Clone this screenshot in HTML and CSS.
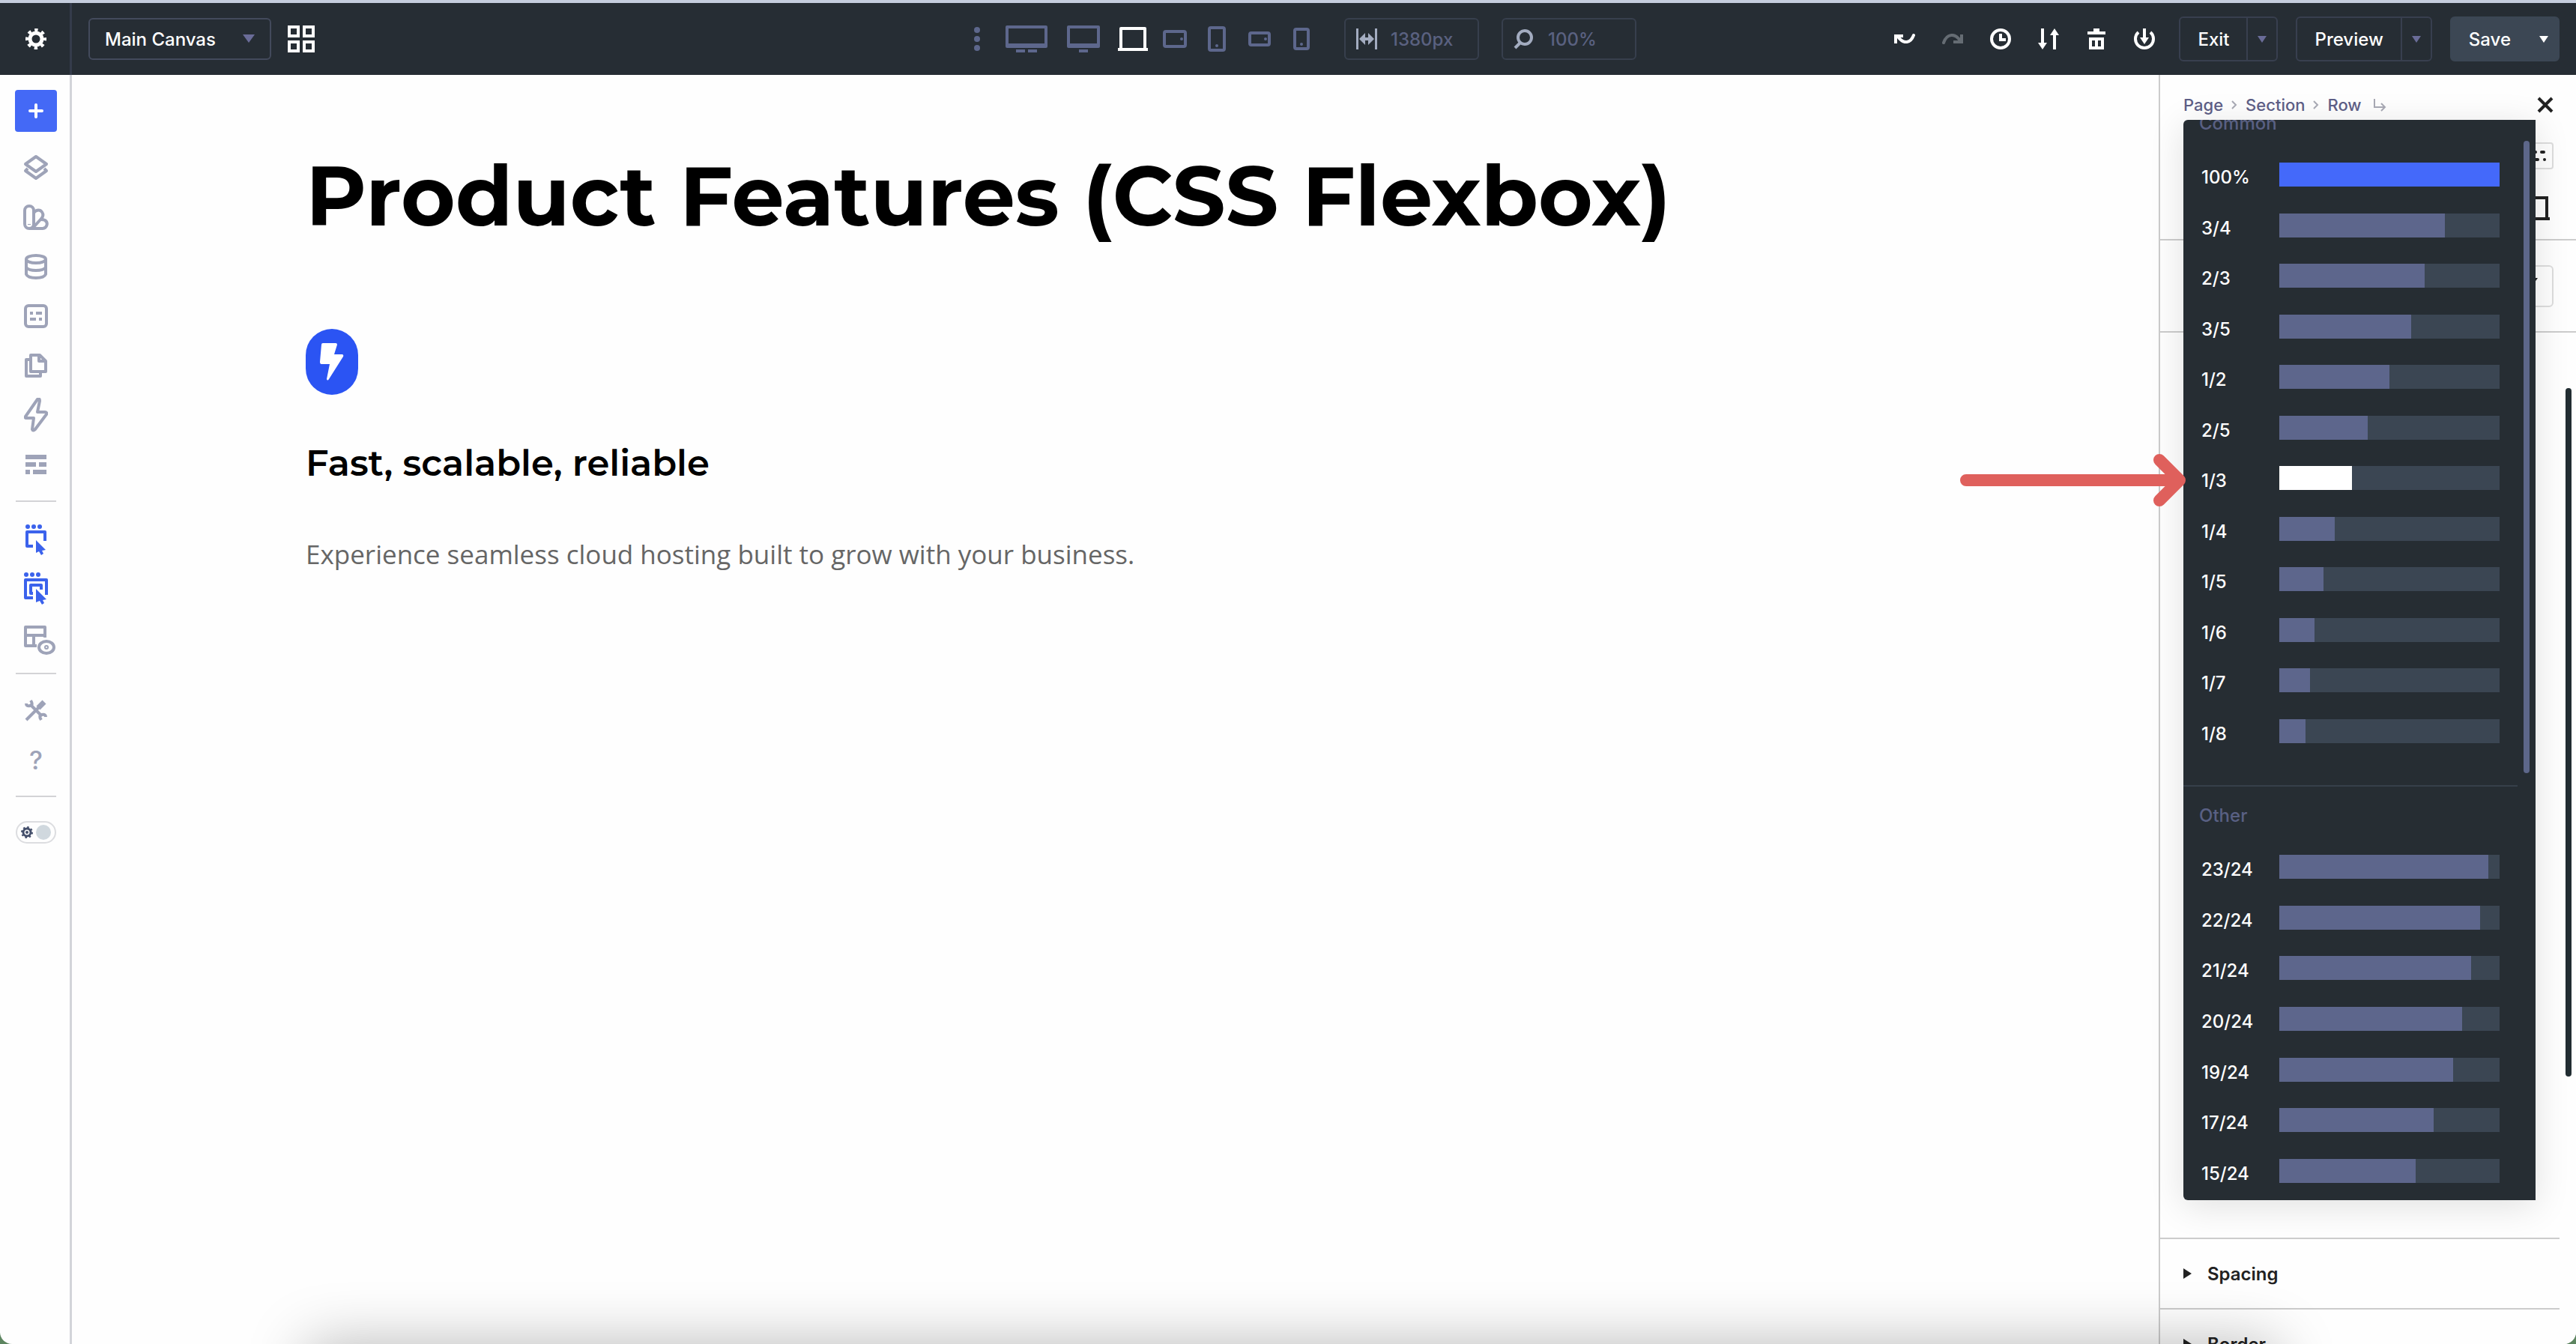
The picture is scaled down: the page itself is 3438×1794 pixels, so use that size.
FILE: index.html
```html
<!DOCTYPE html>
<html lang="en">
<head>
    <meta charset="UTF-8">
    <meta name="viewport" content="width=device-width, initial-scale=1.0">
    <title>Main Canvas</title>
    <link rel="stylesheet" href="styles.css">
</head>
<body>
<div class="app">
    <header class="topbar">
        <div class="topbar-left">
            <button class="settings" aria-label="Settings">
                <svg width="28" height="28" viewBox="0 0 28 28"><circle cx="14" cy="14" r="8" fill="none" stroke="#fff" stroke-width="5"/><circle cx="14" cy="14" r="12" fill="none" stroke="#fff" stroke-width="4" stroke-dasharray="4.4 5.025" stroke-dashoffset="2.2"/></svg>
            </button>
            <label class="canvas-select">
                <select aria-label="Canvas"><option>Main Canvas</option></select>
                <span class="caret"></span>
            </label>
            <button class="icon-btn" aria-label="Grid">
                <svg width="36" height="36" viewBox="0 0 36 36" fill="none" stroke="#fff" stroke-width="4"><path d="M2 2h12v12H2zM22 2h12v12H22zM2 22h12v12H2zM22 22h12v12H22z"/></svg>
            </button>
        </div>
        <div class="topbar-center">
            <button class="icon-btn" aria-label="More">
                <svg width="34" height="36" viewBox="0 0 34 36" fill="#5d678c"><circle cx="18" cy="6" r="4"/><circle cx="18" cy="18" r="4"/><circle cx="18" cy="30" r="4"/></svg>
            </button>
            <button class="icon-btn" aria-label="Ultra wide">
                <svg width="60" height="36" viewBox="0 0 60 36" fill="#5d678c"><path fill-rule="evenodd" d="M4 0h52q2 0 2 2v26q0 2-2 2H4q-2 0-2-2V2q0-2 2-2zm2 4v20h48V4z"/><path d="M16 32h12v4H16zM32 32h12v4H32z"/></svg>
            </button>
            <button class="icon-btn" aria-label="Widescreen">
                <svg width="52" height="36" viewBox="0 0 52 36" fill="#5d678c"><path fill-rule="evenodd" d="M6 0h40q2 0 2 2v26q0 2-2 2H6q-2 0-2-2V2q0-2 2-2zm2 4v20h36V4z"/><path d="M20 32h12v4H20z"/></svg>
            </button>
            <button class="icon-btn" aria-label="Desktop">
                <svg width="40" height="32" viewBox="0 0 40 32" fill="#fff"><path fill-rule="evenodd" d="M4 0h32q2 0 2 2v26h2v4H0v-4h2V2q0-2 2-2zm2 4v24h28V4z"/></svg>
            </button>
            <button class="icon-btn" aria-label="Tablet wide">
                <svg width="32" height="24" viewBox="0 0 32 24"><rect x="2" y="2" width="28" height="20" rx="2" fill="none" stroke="#5d678c" stroke-width="4"/><circle cx="25" cy="12" r="2" fill="#5d678c"/></svg>
            </button>
            <button class="icon-btn" aria-label="Tablet">
                <svg width="40" height="34" viewBox="0 0 40 34"><rect x="10" y="2" width="20" height="30" rx="2" fill="none" stroke="#5d678c" stroke-width="4"/><circle cx="20" cy="26" r="2" fill="#5d678c"/></svg>
            </button>
            <button class="icon-btn" aria-label="Phone wide">
                <svg width="34" height="20" viewBox="0 0 34 20"><rect x="4" y="2" width="26" height="16" rx="2" fill="none" stroke="#5d678c" stroke-width="4"/><circle cx="25" cy="10" r="2" fill="#5d678c"/></svg>
            </button>
            <button class="icon-btn" aria-label="Phone">
                <svg width="38" height="30" viewBox="0 0 38 30"><rect x="10" y="2" width="18" height="26" rx="2" fill="none" stroke="#5d678c" stroke-width="4"/><circle cx="19" cy="22" r="2" fill="#5d678c"/></svg>
            </button>
            <label class="field">
                <svg width="28" height="28" viewBox="0 0 28 28" fill="#a3acc0"><path d="M0 0h3v28H0zM25 0h3v28h-3zM4 14l8-8v6h4V6l8 8-8 8v-6h-4v6z"/></svg>
                <input type="text" value="1380px" aria-label="Width">
            </label>
            <label class="field">
                <svg width="28" height="28" viewBox="0 0 28 28" fill="none" stroke="#a3acc0" stroke-width="4"><circle cx="15" cy="12" r="9"/><path d="M9 19l-7 7"/></svg>
                <input type="text" value="100%" aria-label="Zoom">
            </label>
        </div>
        <div class="topbar-right">
            <button class="tool" aria-label="Undo">
                <svg width="28" height="14" viewBox="0 0 28 14"><path d="M5 4q6 8 12 7 6-1 9-9" fill="none" stroke="#fff" stroke-width="4" stroke-linecap="round"/><path d="M0 1h12v4H4v8H0z" fill="#fff"/></svg>
            </button>
            <button class="tool" aria-label="Redo">
                <svg width="28" height="14" viewBox="0 0 28 14"><path d="M2 12q3-9 10-10 6-1 12 7" fill="none" stroke="#656c73" stroke-width="4" stroke-linecap="round"/><path d="M28 13H15V9h9V1h4z" fill="#656c73"/></svg>
            </button>
            <button class="tool" aria-label="History">
                <svg width="28" height="28" viewBox="0 0 28 28" fill="none" stroke="#fff" stroke-width="4"><circle cx="14" cy="14" r="12"/><path d="M14 7v8h7"/></svg>
            </button>
            <button class="tool" aria-label="Sort">
                <svg width="28" height="28" viewBox="0 0 28 28" fill="#fff"><path d="M4 0h4v19h4l-6 9-6-9h4zM20 28h4V9h4l-6-9-6 9h4z"/></svg>
            </button>
            <button class="tool" aria-label="Trash">
                <svg width="24" height="28" viewBox="0 0 24 28" fill="#fff"><path d="M8 0h8v4h8v4H0V4h8z"/><path fill-rule="evenodd" d="M2 12h20v16H2zm4 4v8h4v-8zm8 0v8h4v-8z"/></svg>
            </button>
            <button class="tool" aria-label="Power">
                <svg width="28" height="28" viewBox="0 0 28 28"><path d="M6 5a12 12 0 1 0 16 0" fill="none" stroke="#fff" stroke-width="4"/><path d="M12 0h4v12h4l-6 9-6-9h4z" fill="#fff"/></svg>
            </button>
            <div class="split">
                <button>Exit</button>
                <button class="drop" aria-label="Exit options"><span class="caret small"></span></button>
            </div>
            <div class="split">
                <button>Preview</button>
                <button class="drop" aria-label="Preview options"><span class="caret small"></span></button>
            </div>
            <div class="split save">
                <button>Save</button>
                <button class="drop" aria-label="Save options"><span class="caret small"></span></button>
            </div>
        </div>
    </header>

    <nav class="sidebar">
        <button class="add" aria-label="Add">
            <svg width="20" height="20" viewBox="0 0 20 20" stroke="#fff" stroke-width="4" stroke-linecap="round"><path d="M10 2v16M2 10h16"/></svg>
        </button>
        <button class="side-btn" aria-label="Layers">
            <svg width="34" height="36" viewBox="0 0 34 36"><path d="M17 3l14 10-14 10L3 13zM6 19l-3 3 14 10 14-10-3-3"/></svg>
        </button>
        <button class="side-btn" aria-label="Design">
            <svg width="34" height="34" viewBox="0 0 34 34"><rect x="2" y="2" width="12" height="30" rx="6"/><path d="M14 11c4-5 9-4 11-1s2 6-1 9L14 30M8 32h18a6 6 0 0 0 3-11q-2-1-5-1"/><path d="M8 26v1"/></svg>
        </button>
        <button class="side-btn" aria-label="Data">
            <svg width="30" height="34" viewBox="0 0 30 34"><ellipse cx="15" cy="7" rx="13" ry="5"/><path d="M2 7v20q2 5 13 5t13-5V7M2 18q3 4 13 4t13-4"/></svg>
        </button>
        <button class="side-btn" aria-label="Forms">
            <svg width="32" height="32" viewBox="0 0 32 32"><rect x="2" y="2" width="28" height="28" rx="4"/><path d="M8 12h4M16 12h8M8 20h8M20 20h4"/></svg>
        </button>
        <button class="side-btn" aria-label="Pages">
            <svg width="30" height="34" viewBox="0 0 30 34"><path d="M8 25V3h12l8 8v14zM19 3v8h9M8 9H2v22h19v-5"/></svg>
        </button>
        <button class="side-btn" aria-label="Interactions">
            <svg width="32" height="46" viewBox="0 0 32 46"><path d="M18 2L2 25q-1 2 1 2h10l-2 15q1 3 4 0l15-20q1-3-2-3H18l3-15q0-4-3-2z"/></svg>
        </button>
        <button class="side-btn" aria-label="Structure">
            <svg class="rows" width="28" height="26" viewBox="0 0 28 26"><path d="M0 3h28M0 13h14M18 13h10M0 23h6M10 23h18"/></svg>
        </button>
        <hr>
        <button class="side-btn active" aria-label="Click mode">
            <svg width="32" height="46" viewBox="0 -4 32 46"><path d="M12 30H4V11h24v12"/><g class="solid"><circle cx="5" cy="4" r="3"/><circle cx="13" cy="4" r="3"/><circle cx="21" cy="4" r="3"/><path d="M16 22l13 13-5 1 2 4-3 2-3-5-4 2z"/></g></svg>
        </button>
        <button class="side-btn active" aria-label="Nested click mode">
            <svg width="32" height="48" viewBox="0 -4 32 48"><path d="M12 34H2V10h28v20M12 28H9V17h14v6"/><g class="solid"><circle cx="3" cy="3" r="3"/><circle cx="11" cy="3" r="3"/><circle cx="19" cy="3" r="3"/><path d="M16 22l14 14-5 1 2 4-3 2-3-5-5 2z"/></g></svg>
        </button>
        <button class="side-btn" aria-label="Layout view">
            <svg class="wide" width="52" height="48" viewBox="0 -8 52 48"><path d="M27 28H12V3h26v14M12 14h26M23 14v14"/><ellipse cx="40" cy="30" rx="10" ry="8" class="knock"/><circle cx="40" cy="30" r="1"/></svg>
        </button>
        <hr>
        <button class="side-btn" aria-label="Tools">
            <svg width="30" height="30" viewBox="0 0 30 30"><path d="M2 28L20 10" /><path d="M18 12l8-8" class="grip"/><path d="M7 7l16 16"/><path d="M8 2q4 6-1 7-5 1-5-3M22 28q-4-6 1-7 5-1 5 3"/></svg>
        </button>
        <button class="side-btn help" aria-label="Help">?</button>
        <hr>
        <label class="theme">
            <input type="checkbox" aria-label="Dark mode">
            <svg width="16" height="16" viewBox="0 0 16 16" fill="none" stroke="#444f6b"><circle cx="8" cy="8" r="5" stroke-width="3"/><circle cx="8" cy="8" r="7" stroke-width="2" stroke-dasharray="2.500 3"/><circle cx="8" cy="8" r="1" stroke-width="2"/></svg>
            <span class="knob"></span>
        </label>
    </nav>

    <main class="canvas">
        <h1>Product Features (CSS Flexbox)</h1>
        <div class="badge">
            <svg width="32" height="50" viewBox="0 0 32 50" fill="#fff"><path d="M4 0h17q2 0 2 2l-4 13h11q2 1 1 3L12 48q-2 3-3 0l4-20H2q-2 0-2-3L2 2q0-2 2-2z"/></svg>
        </div>
        <h3>Fast, scalable, reliable</h3>
        <p>Experience seamless cloud hosting built to grow with your business.</p>
    </main>

    <aside class="panel">
        <div class="panel-head">
            <div class="crumbs">
                <a href="#">Page</a>
                <svg width="8" height="12" viewBox="0 0 8 12"><path d="M1 1l5 5-5 5"/></svg>
                <a href="#">Section</a>
                <svg width="8" height="12" viewBox="0 0 8 12"><path d="M1 1l5 5-5 5"/></svg>
                <a href="#">Row</a>
                <svg width="22" height="18" viewBox="-4 0 22 18"><path d="M2 1v11h13M11 7l5 5-5 5"/></svg>
                <button class="close" aria-label="Close">
                    <svg width="22" height="22" viewBox="0 0 22 22"><path d="M2 2l18 18M20 2L2 20"/></svg>
                </button>
            </div>
            <button class="mini-box" aria-label="Filter">
                <svg width="40" height="16" viewBox="0 0 40 16" stroke="#222" stroke-width="4" stroke-linecap="round"><path d="M2 3h10M18 3h8M34 3h3M2 13h6M14 13h15M38 13h0"/></svg>
            </button>
            <svg class="laptop" width="40" height="32" viewBox="0 0 40 32" fill="#222"><path fill-rule="evenodd" d="M4 0h34v28h2v4H0v-4h2V0zm2 4v24h28V4z"/></svg>
        </div>
        <div class="panel-search">
            <button class="search-box" aria-label="Search options"><span class="caret"></span></button>
        </div>
        <div class="panel-body"></div>
        <button class="accordion"><span class="arrow"></span>Spacing</button>
        <button class="accordion"><span class="arrow"></span>Border</button>
        <div class="panel-scroll"></div>

        <div class="popup">
            <div class="group-title">Common</div>
            <div class="sizes common">
                <button class="size full"><span>100%</span><i class="track"><i class="fill" style="width:100%"></i></i></button>
                <button class="size"><span>3/4</span><i class="track"><i class="fill" style="width:75%"></i></i></button>
                <button class="size"><span>2/3</span><i class="track"><i class="fill" style="width:66%"></i></i></button>
                <button class="size"><span>3/5</span><i class="track"><i class="fill" style="width:60%"></i></i></button>
                <button class="size"><span>1/2</span><i class="track"><i class="fill" style="width:50%"></i></i></button>
                <button class="size"><span>2/5</span><i class="track"><i class="fill" style="width:40%"></i></i></button>
                <button class="size hover"><span>1/3</span><i class="track"><i class="fill" style="width:33%"></i></i></button>
                <button class="size"><span>1/4</span><i class="track"><i class="fill" style="width:25%"></i></i></button>
                <button class="size"><span>1/5</span><i class="track"><i class="fill" style="width:20%"></i></i></button>
                <button class="size"><span>1/6</span><i class="track"><i class="fill" style="width:16%"></i></i></button>
                <button class="size"><span>1/7</span><i class="track"><i class="fill" style="width:14%"></i></i></button>
                <button class="size"><span>1/8</span><i class="track"><i class="fill" style="width:12%"></i></i></button>
            </div>
            <div class="divider"></div>
            <div class="group-title">Other</div>
            <div class="sizes other">
                <button class="size"><span>23/24</span><i class="track"><i class="fill" style="width:95%"></i></i></button>
                <button class="size"><span>22/24</span><i class="track"><i class="fill" style="width:91%"></i></i></button>
                <button class="size"><span>21/24</span><i class="track"><i class="fill" style="width:87%"></i></i></button>
                <button class="size"><span>20/24</span><i class="track"><i class="fill" style="width:83%"></i></i></button>
                <button class="size"><span>19/24</span><i class="track"><i class="fill" style="width:79%"></i></i></button>
                <button class="size"><span>17/24</span><i class="track"><i class="fill" style="width:70%"></i></i></button>
                <button class="size"><span>15/24</span><i class="track"><i class="fill" style="width:62%"></i></i></button>
            </div>
            <div class="popup-scroll"></div>
        </div>
        <svg class="pointer" width="304" height="72" viewBox="0 0 304 72" fill="none" stroke="#df605c" stroke-width="16" stroke-linecap="round" stroke-linejoin="round"><path d="M10 36h282M268 9l27 27-27 27"/></svg>
    </aside>
    <div class="dock-shadow"></div>
</div>
</body>
</html>
```

FILE: styles.css
```css
* {
    margin: 0;
    padding: 0;
    box-sizing: border-box;
}
body {
    background: #5d8560;
    font-family: Inter, "Liberation Sans", sans-serif;
}
button, input, select {
    font: inherit;
    color: inherit;
    background: none;
    border: none;
}
button {
    display: flex;
    align-items: center;
    justify-content: center;
    cursor: pointer;
}
a {
    color: inherit;
    text-decoration: none;
}
.app {
    position: relative;
    display: grid;
    grid-template-columns: 96px 1fr 557px;
    grid-template-rows: 100px 1fr;
    height: 100vh;
    overflow: hidden;
    background: #fefefe;
    border-radius: 0 0 16px 16px;
}

/* top bar */
.topbar {
    grid-column: 1 / -1;
    display: grid;
    grid-template-columns: 1fr auto 1fr;
    border-top: 4px solid #c5cddd;
    background: #262d34;
    color: #fff;
    font-size: 24px;
    font-weight: 500;
}
.topbar-left, .topbar-center, .topbar-right {
    display: flex;
    align-items: center;
}
.settings {
    width: 96px;
    height: 96px;
    padding-left: 3px;
    border-right: 3px solid #343b4b;
}
.canvas-select {
    position: relative;
    margin: 0 22px;
}
.canvas-select select {
    appearance: none;
    width: 244px;
    height: 56px;
    padding: 0 20px;
    border: 2px solid #434a5c;
    border-radius: 6px;
    font-weight: 500;
}
.caret {
    border: 8px solid transparent;
    border-top: 11px solid #6a6c98;
    border-bottom: 0;
}
.caret.small {
    border-width: 6px;
    border-top-width: 9px;
    border-bottom: 0;
}
.canvas-select .caret {
    position: absolute;
    right: 22px;
    top: 22px;
}
.topbar-center {
    gap: 20px;
    padding-left: 32px;
}
.field {
    display: flex;
    align-items: center;
    gap: 18px;
    width: 180px;
    height: 56px;
    padding: 0 14px;
    border: 2px solid #373f4d;
    border-radius: 6px;
    color: #5a6180;
    margin-left: 10px;
}
.field:first-of-type {
    margin-left: 18px;
}
.field svg {
    flex: none;
}
.field input {
    width: 100%;
    min-width: 0;
}
.topbar-right {
    justify-content: flex-end;
    padding-right: 22px;
}
.tool {
    width: 64px;
    height: 64px;
}
.split {
    display: flex;
    height: 60px;
    margin-left: 24px;
    border: 2px solid #383f4f;
    border-radius: 6px;
}
.tool + .split {
    margin-left: 14px;
}
.split button {
    padding: 0 23px;
}
.split .drop {
    width: 40px;
    padding: 0;
    border-left: 2px solid #383f4f;
}
.save {
    background: #3c4754;
    border-color: #3c4754;
}
.save .drop {
    border-color: transparent;
}
.save .caret {
    border-top-color: #fff;
}

/* left sidebar */
.sidebar {
    display: flex;
    flex-direction: column;
    align-items: center;
    padding: 20px 0 0 3px;
    border-right: 3px solid #d3d4d9;
}
.add {
    width: 56px;
    height: 56px;
    margin-bottom: 15px;
    border-radius: 4px;
    background: #4469f6;
}
.side-btn {
    width: 66px;
    height: 66px;
    color: #9ea3b8;
}
.side-btn svg {
    fill: none;
    stroke: currentColor;
    stroke-width: 4px;
    stroke-linejoin: round;
}
.side-btn .rows {
    stroke-width: 6px;
}
.side-btn .grip {
    stroke-width: 7px;
}
.side-btn .solid {
    fill: currentColor;
    stroke: none;
}
.side-btn .knock {
    fill: #fefefe;
}
.side-btn.active {
    color: #3b62ec;
}
.help {
    font-size: 34px;
    font-weight: 500;
}
.sidebar hr {
    width: 54px;
    margin: 15px 0;
    border: 0;
    border-top: 2px solid #d3d3d6;
}
.theme {
    display: flex;
    align-items: center;
    justify-content: space-between;
    width: 54px;
    height: 30px;
    margin-top: 17px;
    padding: 0 5px;
    border: 2px solid #dcdde0;
    border-radius: 15px;
}
.theme input {
    position: absolute;
    opacity: 0;
}
.knob {
    width: 20px;
    height: 20px;
    border-radius: 50%;
    background: #d0d8de;
}

/* page canvas */
.canvas {
    padding: 94px 312px;
    color: #000;
    font-family: Montserrat, Inter, sans-serif;
}
.canvas h1 {
    font-size: 111px;
    line-height: 136px;
    font-weight: 700;
    white-space: nowrap;
}
.badge {
    display: flex;
    align-items: center;
    justify-content: center;
    width: 70px;
    height: 88px;
    margin: 109px 0 59px;
    border-radius: 35px;
    background: #2b54f3;
}
.canvas h3 {
    font-size: 48px;
    line-height: 64px;
    font-weight: 600;
}
.canvas p {
    margin-top: 64px;
    color: #666;
    font-family: "Open Sans", sans-serif;
    font-size: 35px;
    line-height: 52px;
}

/* right panel */
.panel {
    position: relative;
    display: flex;
    flex-direction: column;
    min-height: 0;
    border-left: 2px solid #ccc;
    background: #fefefe;
    font-size: 24px;
}
.panel-head {
    display: flex;
    flex-direction: column;
    align-items: flex-end;
    flex: none;
    height: 221px;
    padding: 24px 30px 0 31px;
    border-bottom: 2px solid #ccc;
}
.crumbs {
    display: flex;
    align-items: center;
    align-self: stretch;
    gap: 11px;
    height: 32px;
    color: #5e5f87;
    font-size: 22px;
    font-weight: 500;
}
.crumbs svg {
    fill: none;
    stroke: #a9aab5;
    stroke-width: 2px;
}
.crumbs .close {
    margin-left: auto;
}
.close svg {
    stroke: #222;
    stroke-width: 4px;
}
.mini-box {
    width: 60px;
    height: 36px;
    margin-top: 34px;
    border: 2px solid #ddd;
    border-radius: 4px;
}
.laptop {
    margin: 36px 5px 0 0;
}
.panel-search {
    display: flex;
    justify-content: flex-end;
    flex: none;
    height: 123px;
    padding: 33px 30px 0;
    border-bottom: 2px solid #ccc;
}
.search-box {
    align-items: flex-start;
    justify-content: flex-end;
    width: 300px;
    height: 56px;
    padding: 15px 19px;
    border: 2px solid #ddd;
    border-radius: 6px;
}
.search-box .caret {
    border-top-color: #222;
}
.panel-body {
    flex: 1;
}
.accordion {
    flex: none;
    justify-content: flex-start;
    gap: 21px;
    height: 94px;
    margin-right: 22px;
    padding-left: 31px;
    border-top: 2px solid #ccc;
    color: #222;
    font-weight: 600;
}
.accordion:last-of-type {
    margin-bottom: -46px;
}
.arrow {
    border: 7px solid transparent;
    border-left: 11px solid #222;
    border-right: 0;
}
.panel-scroll {
    position: absolute;
    right: 6px;
    top: 418px;
    bottom: 357px;
    width: 8px;
    border-radius: 4px;
    background: #222d32;
}

/* width picker */
.popup {
    position: absolute;
    left: 31px;
    top: 60px;
    bottom: 192px;
    width: 470px;
    overflow: hidden;
    border-radius: 6px 0 0 6px;
    background: #262d33;
    box-shadow: 0 8px 48px rgba(0, 0, 0, 0.12);
    color: #fff;
}
.group-title {
    margin: -11px 0 36px 21px;
    color: #596083;
    line-height: 32px;
    font-weight: 500;
}
.sizes {
    display: flex;
    flex-direction: column;
    justify-content: space-between;
}
.common {
    height: 775px;
}
.other {
    height: 438px;
}
.size {
    justify-content: flex-start;
    align-items: flex-end;
    height: 32px;
    padding: 0 48px 0 24px;
    font-weight: 500;
    line-height: 24px;
}
.size span {
    width: 104px;
    text-align: left;
}
.track {
    flex: 1;
    height: 32px;
    background: #3b4653;
}
.fill {
    display: block;
    height: 32px;
    background: #5d668c;
}
.full .fill {
    background: #4469fa;
}
.hover .fill {
    background: #fff;
}
.divider {
    width: 446px;
    margin: 56px 0 34px;
    border-top: 2px solid #363f4a;
}
.popup-scroll {
    position: absolute;
    right: 8px;
    top: 28px;
    width: 8px;
    height: 844px;
    border-radius: 4px;
    background: #5d678a;
}
.pointer {
    position: absolute;
    right: 520px;
    top: 505px;
}
.dock-shadow {
    position: absolute;
    left: 410px;
    right: 400px;
    top: 100%;
    height: 100px;
    box-shadow: 0 0 80px rgba(0, 0, 0, 0.28);
    pointer-events: none;
}
```
